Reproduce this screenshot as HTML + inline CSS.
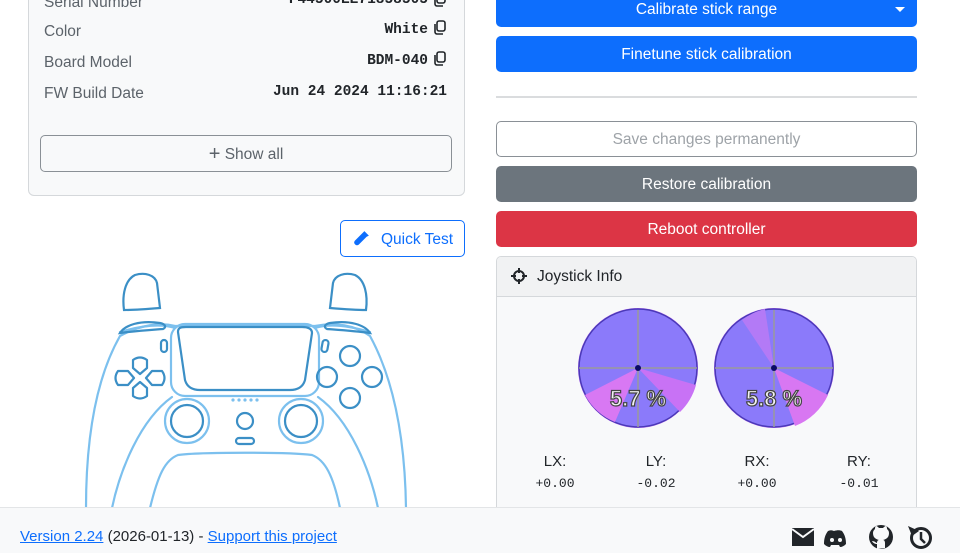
<!DOCTYPE html>
<html><head><meta charset="utf-8"><style>
*{box-sizing:border-box;margin:0;padding:0}
body{width:960px;height:553px;overflow:hidden;background:#fff;font-family:"Liberation Sans",sans-serif;color:#212529;position:relative;font-size:16px}
.abs{position:absolute}
.card{position:absolute;left:28px;top:-20px;width:437px;height:216px;background:#f8f9fa;border:1px solid #d5d8db;border-radius:6px}
.lbl{position:absolute;left:44px;color:#5c636a;font-size:15.5px}
.val{position:absolute;right:532px;font-family:"Liberation Mono",monospace;font-size:14.5px;color:#212529;font-weight:bold}
.btn{position:absolute;left:496px;width:421px;height:36px;border-radius:5px;color:#fff;text-align:center;line-height:38px;font-size:15.5px}
.mono{font-family:"Liberation Mono",monospace;font-size:13px}
</style></head><body>
<div class="card"></div>
<div class="lbl" style="top:-6px">Serial Number</div>
<div class="val" style="top:-8px">F44500EE71858505</div>
<div class="lbl" style="top:23px">Color</div>
<div class="val" style="top:22px">White</div>
<div class="lbl" style="top:54px">Board Model</div>
<div class="val" style="top:53px">BDM-040</div>
<div class="lbl" style="top:85px">FW Build Date</div>
<div class="val" style="top:84px;right:513px">Jun 24 2024 11:16:21</div>
<svg class="abs" style="left:433px;top:-6px" width="16" height="120" fill="none" stroke="#212529" stroke-width="1.6">
<rect x="4" y="0" width="8" height="9" rx="2"/><path d="M2 3v7a2 2 0 0 0 2 2h6"/>
<rect x="4" y="27" width="8" height="10" rx="2"/><path d="M2 30v8a2 2 0 0 0 2 2h6"/>
<rect x="4" y="58" width="8" height="10" rx="2"/><path d="M2 61v8a2 2 0 0 0 2 2h6"/>
</svg>
<div class="abs" style="left:40px;top:135px;width:412px;height:37px;border:1px solid #8a9096;border-radius:5px;text-align:center;line-height:37px;color:#5c636a;font-size:15.5px"><span style="font-size:20px;vertical-align:-1px">+</span> Show all</div>
<div class="abs" style="left:340px;top:220px;width:125px;height:37px;border:1px solid #0d6efd;border-radius:5px;color:#0d6efd;line-height:37px;font-size:15.5px;padding-left:40px">Quick Test</div>
<svg class="abs" style="left:352px;top:230px" width="18" height="18" viewBox="0 0 16 16"><path d="M11 1l4 4-2 1-7 7a2.5 2.5 0 0 1-3.5-3.5l7-7z" fill="#0d6efd"/></svg>

<svg class="abs" style="left:0;top:0" width="480" height="510" fill="none" stroke-width="2.2" stroke-linecap="round">
<g stroke="#7cc0ee">
<path d="M86 508C86 440 95 380 120 336C140 325 160 322 175 326L315 326C335 322 355 325 370 336C394 380 405 440 406 508"/>
<path d="M112 508C120 470 140 420 172 397M378 508C370 470 350 420 318 397"/>
<path d="M150 508C158 475 165 460 178 455C200 452 290 452 312 455C325 460 333 475 340 508"/>
<path d="M120 332C140 326 160 323 175 328M370 332C350 326 330 323 315 328"/>
<rect x="171" y="324" width="148" height="72" rx="14"/>
<circle cx="187" cy="421" r="22"/><circle cx="301" cy="421" r="22"/>
</g>
<g stroke="#3b8fc6">
<path d="M124 310C122 295 125 280 135 275C145 272 155 275 157 283L160 308C148 309 135 310 124 310Z"/>
<path d="M366 310C368 295 365 280 355 275C345 272 335 275 333 283L330 308C342 309 355 310 366 310Z"/>
<path d="M120 333C125 325 140 320 160 323C165 324 167 327 163 329C150 330 135 331 120 333Z"/>
<path d="M370 333C365 325 350 320 330 323C325 324 323 327 327 329C340 330 355 331 370 333Z"/>
<path d="M178 332C178 328 180 327 186 327L302 327C309 327 312 329 312 333L305 380C303 387 298 390 290 390L200 390C192 390 187 387 185 380Z"/>
<rect x="161" y="340" width="6" height="12" rx="3"/><rect x="322" y="340" width="6" height="12" rx="3" transform="rotate(10 325 346)"/>
<path d="M133 360q7-5 14 0v8l-7 6-7-6zM133 396q7 5 14 0v-8l-7-6-7 6zM118 371q-5 7 0 14h10l6-7-6-7zM162 371q5 7 0 14h-10l-6-7 6-7z" stroke-linejoin="round"/>
<circle cx="350" cy="356" r="10"/><circle cx="327" cy="377" r="10"/><circle cx="372" cy="377" r="10"/><circle cx="350" cy="398" r="10"/>
<circle cx="187" cy="421" r="16"/><circle cx="301" cy="421" r="16"/>
<circle cx="245" cy="421" r="8"/><rect x="236" y="438" width="18" height="6" rx="3"/>
</g>
<g fill="#7cc0ee" stroke="none"><circle cx="233" cy="400" r="1.6"/><circle cx="239" cy="400" r="1.6"/><circle cx="245" cy="400" r="1.6"/><circle cx="251" cy="400" r="1.6"/><circle cx="257" cy="400" r="1.6"/></g>
</svg>

<div class="btn" style="top:-9px;background:#0d6efd">Calibrate stick range</div>
<div class="abs" style="left:895px;top:7px;width:0;height:0;border-left:5px solid transparent;border-right:5px solid transparent;border-top:5px solid #fff"></div>
<div class="btn" style="top:36px;background:#0d6efd">Finetune stick calibration</div>
<div class="abs" style="left:496px;top:96px;width:421px;height:2px;background:#dadcde"></div>
<div class="btn" style="top:121px;background:#fff;border:1px solid #8a9096;color:#9ea3a8;line-height:36px">Save changes permanently</div>
<div class="btn" style="top:166px;background:#6c757d">Restore calibration</div>
<div class="btn" style="top:211px;background:#dc3545">Reboot controller</div>

<div class="abs" style="left:496px;top:256px;width:421px;height:270px;border:1px solid #d5d8db;border-radius:5px;background:#f8f9fa;overflow:hidden">
<div style="height:40px;background:#f1f2f3;border-bottom:1px solid #d5d8db;line-height:40px;padding-left:40px;font-size:15.5px">Joystick Info</div>
</div>
<svg class="abs" style="left:511px;top:268px" width="16" height="16" viewBox="0 0 16 16" fill="none" stroke="#212529" stroke-width="2"><circle cx="8" cy="8" r="5"/><path d="M8 0v5M8 11v5M0 8h5M11 8h5"/></svg>

<svg class="abs" style="left:570px;top:300px" width="280" height="140">
<circle cx="68" cy="68" r="60" fill="#c56ef5"/>
<circle cx="68" cy="68" r="59" fill="#8b7afa" stroke="#4a3ab8" stroke-width="1.5"/>
<path d="M68 68L45 122A60 60 0 0 1 15 95Z" fill="#d878f3"/>
<path d="M68 68L110 112A60 60 0 0 0 126 85Z" fill="#c872f5"/>
<path d="M68 10v117M9 68h118" stroke="#999" stroke-width="1.5"/>
<circle cx="68" cy="68" r="3" fill="#0a0a66"/>
<text x="68" y="106" text-anchor="middle" font-size="22" font-weight="bold" fill="#f2f2f2" stroke="#444" stroke-width="1.2" font-family="Liberation Sans">5.7 %</text>
<circle cx="204" cy="68" r="60" fill="#c56ef5"/>
<circle cx="204" cy="68" r="59" fill="#8b7afa" stroke="#4a3ab8" stroke-width="1.5"/>
<path d="M204 68L225 126A60 60 0 0 0 258 95Z" fill="#d877f2"/>
<path d="M204 68L172 20A60 60 0 0 1 195 9Z" fill="#b37af6"/>
<path d="M204 10v117M145 68h118" stroke="#999" stroke-width="1.5"/>
<circle cx="204" cy="68" r="3" fill="#0a0a66"/>
<text x="204" y="106" text-anchor="middle" font-size="22" font-weight="bold" fill="#f2f2f2" stroke="#444" stroke-width="1.2" font-family="Liberation Sans">5.8 %</text>
</svg>
<div class="abs" style="left:525px;top:453px;width:60px;text-align:center;font-size:15px">LX:<div class="mono" style="margin-top:6px">+0.00</div></div>
<div class="abs" style="left:626px;top:453px;width:60px;text-align:center;font-size:15px">LY:<div class="mono" style="margin-top:6px">-0.02</div></div>
<div class="abs" style="left:727px;top:453px;width:60px;text-align:center;font-size:15px">RX:<div class="mono" style="margin-top:6px">+0.00</div></div>
<div class="abs" style="left:829px;top:453px;width:60px;text-align:center;font-size:15px">RY:<div class="mono" style="margin-top:6px">-0.01</div></div>

<div class="abs" style="left:0;top:507px;width:960px;height:46px;background:#f8f9fa;border-top:1px solid #e3e5e7"></div>
<div class="abs" style="left:20px;top:528px;font-size:15px"><u style="color:#0d6efd">Version 2.24</u> (2026-01-13) - <u style="color:#0d6efd">Support this project</u></div>
<svg class="abs" style="left:790px;top:524px" width="150" height="26" fill="#212529">
<path d="M2 4h22v18H2z"/><path d="M2 5l11 8 11-8" stroke="#f8f9fa" stroke-width="2" fill="none"/>
<path d="M44 7c3-1 6-1 8 0 3 4 4 8 4 13-2 2-4 3-6 3l-1-2h-8l-1 2c-2 0-4-1-6-3 0-5 1-9 4-13 2-1 4-1 6 0z"/>
<circle cx="42" cy="16" r="2" fill="#f8f9fa"/><circle cx="50" cy="16" r="2" fill="#f8f9fa"/>
<circle cx="91" cy="13" r="12"/><path d="M87 25v-5c-2 0-4-1-5-3 3 0 4 2 5 2 0-2 1-3 2-3-4-1-6-3-6-7 0-2 1-3 2-4 0-1 0-2 1-3 1 0 2 1 3 2h4c1-1 2-2 3-2 1 1 1 2 1 3 1 1 2 2 2 4 0 4-2 6-6 7 1 0 2 1 2 3v5z" fill="#f8f9fa"/>
<circle cx="131" cy="14" r="9.5" fill="none" stroke="#212529" stroke-width="3"/><path d="M118 2l4 10 7-5z"/><path d="M131 8v7l4 4" fill="none" stroke="#212529" stroke-width="2.5"/>
</svg>
</body></html>
